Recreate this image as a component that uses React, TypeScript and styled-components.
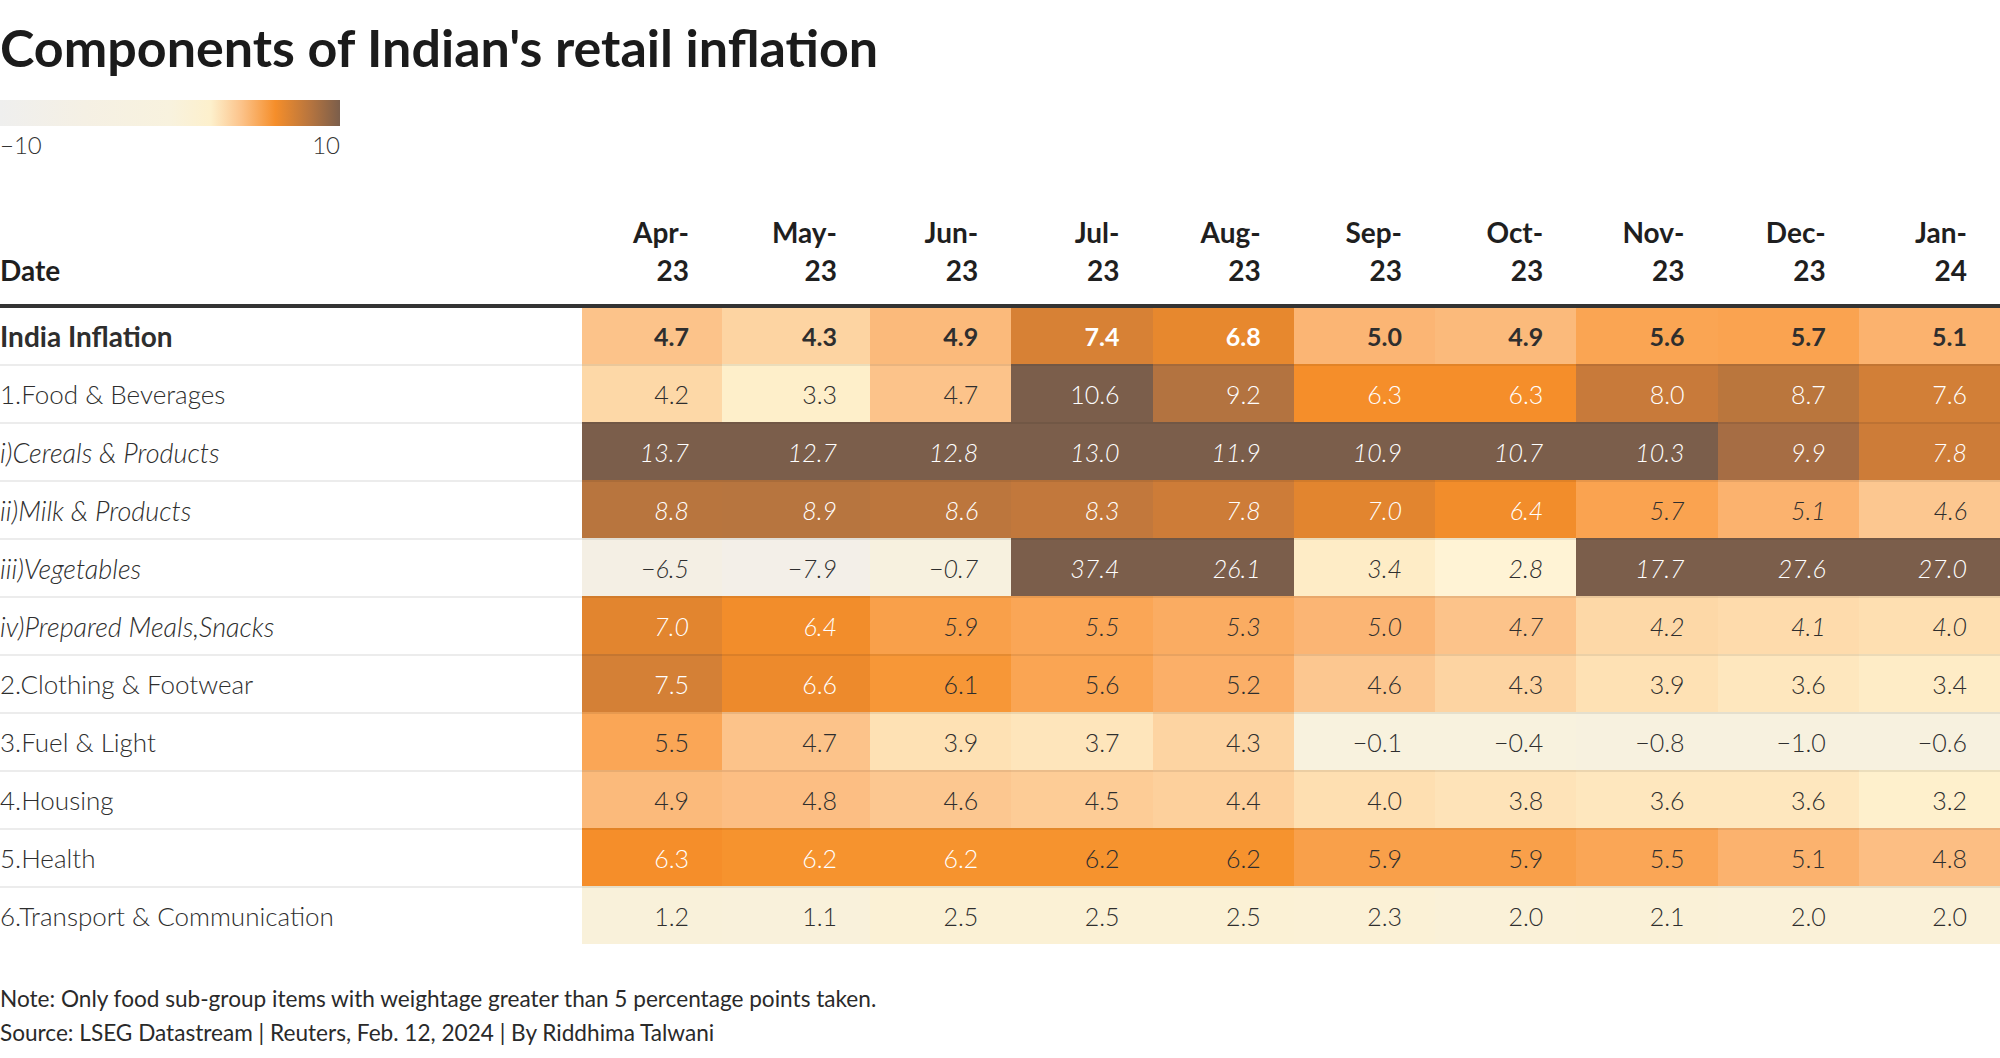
import styled, { createGlobalStyle } from 'styled-components';

const GlobalStyle = createGlobalStyle`
  html, body {
    margin: 0;
    padding: 0;
    background: #ffffff;
  }
  body {
    font-family: Lato, 'Liberation Sans', sans-serif;
    color: #222;
  }
`;

const COLS = '582px 140px 148px repeat(8, 1fr)';

const Page = styled.div`
  width: 2000px;
  padding-top: 25px;
`;

const Title = styled.h1`
  margin: 0;
  font-size: 52px;
  line-height: 45px;
  font-weight: 700;
  color: #1b1b1b;
`;

const Legend = styled.div`
  margin-top: 30px;
  width: 340px;
`;

const LegendBar = styled.div`
  height: 26px;
  background: linear-gradient(
    to right,
    #efefee 0%,
    #f5f0e4 25%,
    #f8f2de 50%,
    #fdf0cc 62%,
    #fcc38a 71%,
    #f58e2a 81%,
    #b8753e 91%,
    #7b5e4b 100%
  );
`;

const LegendLabels = styled.div`
  display: flex;
  justify-content: space-between;
  margin-top: 7px;
  font-size: 24px;
  line-height: 24px;
  font-weight: 300;
  color: #333;
`;

const Header = styled.div`
  display: grid;
  grid-template-columns: ${COLS};
  height: 151px;
  box-sizing: border-box;
  border-bottom: 4px solid #333;
`;

const HeadCell = styled.div<{ $left?: boolean }>`
  display: flex;
  align-items: flex-end;
  justify-content: ${p => (p.$left ? 'flex-start' : 'flex-end')};
  text-align: ${p => (p.$left ? 'left' : 'right')};
  padding: 0 ${p => (p.$left ? '0' : '33px')} 15px 0;
  font-size: 28px;
  line-height: 38px;
  font-weight: 700;
  color: #1f1f1f;
`;

const Row = styled.div`
  display: grid;
  grid-template-columns: ${COLS};
`;

const Cell = styled.div<{ $first?: boolean; $kind?: string }>`
  display: flex;
  align-items: center;
  height: 56px;
  border-top: ${p => (p.$first ? 'none' : '2px solid rgba(0, 0, 0, 0.075)')};
  font-size: 25px;
  line-height: 25px;
  font-weight: ${p => (p.$kind === 'total' ? 700 : 300)};
  font-style: ${p => (p.$kind === 'sub' ? 'italic' : 'normal')};
  color: #2e2e2e;
`;

const LabelCell = styled(Cell)`
  justify-content: flex-start;
  font-size: ${p => (p.$kind === 'total' ? '28px' : p.$kind === 'sub' ? '27px' : '26px')};
`;

const ValueCell = styled(Cell)<{ $light?: boolean }>`
  justify-content: flex-end;
  padding-right: 33px;
  color: ${p => (p.$light ? '#ffffff' : '#2e2e2e')};
`;

const Footer = styled.div`
  margin-top: 38px;
  font-size: 22.6px;
  line-height: 34px;
  font-weight: 400;
  color: #2a2a2a;
`;

const months: [string, string][] = [
  ['Apr', '23'],
  ['May', '23'],
  ['Jun', '23'],
  ['Jul', '23'],
  ['Aug', '23'],
  ['Sep', '23'],
  ['Oct', '23'],
  ['Nov', '23'],
  ['Dec', '23'],
  ['Jan', '24'],
];

type RowData = {
  label: string;
  kind?: 'total' | 'sub';
  values: number[];
  white?: number[];
};

const rows: RowData[] = [
  { label: 'India Inflation', kind: 'total', values: [4.7, 4.3, 4.9, 7.4, 6.8, 5.0, 4.9, 5.6, 5.7, 5.1] },
  { label: '1.Food & Beverages', values: [4.2, 3.3, 4.7, 10.6, 9.2, 6.3, 6.3, 8.0, 8.7, 7.6] },
  { label: 'i)Cereals & Products', kind: 'sub', values: [13.7, 12.7, 12.8, 13.0, 11.9, 10.9, 10.7, 10.3, 9.9, 7.8] },
  { label: 'ii)Milk & Products', kind: 'sub', values: [8.8, 8.9, 8.6, 8.3, 7.8, 7.0, 6.4, 5.7, 5.1, 4.6] },
  { label: 'iii)Vegetables', kind: 'sub', values: [-6.5, -7.9, -0.7, 37.4, 26.1, 3.4, 2.8, 17.7, 27.6, 27.0] },
  { label: 'iv)Prepared Meals,Snacks', kind: 'sub', values: [7.0, 6.4, 5.9, 5.5, 5.3, 5.0, 4.7, 4.2, 4.1, 4.0] },
  { label: '2.Clothing & Footwear', values: [7.5, 6.6, 6.1, 5.6, 5.2, 4.6, 4.3, 3.9, 3.6, 3.4] },
  { label: '3.Fuel & Light', values: [5.5, 4.7, 3.9, 3.7, 4.3, -0.1, -0.4, -0.8, -1.0, -0.6] },
  { label: '4.Housing', values: [4.9, 4.8, 4.6, 4.5, 4.4, 4.0, 3.8, 3.6, 3.6, 3.2] },
  { label: '5.Health', values: [6.3, 6.2, 6.2, 6.2, 6.2, 5.9, 5.9, 5.5, 5.1, 4.8], white: [0, 1, 2] },
  { label: '6.Transport & Communication', values: [1.2, 1.1, 2.5, 2.5, 2.5, 2.3, 2.0, 2.1, 2.0, 2.0] },
];

// colour scale, tuned against the chart's legend
const stops: [number, string][] = [
  [-10, '#efefee'],
  [-8, '#f3efe8'],
  [-6.5, '#f4efe4'],
  [-1, '#f7f1df'],
  [0, '#f8f2de'],
  [2, '#faf1d8'],
  [2.5, '#fbf1d5'],
  [2.8, '#fff3d5'],
  [3.3, '#feefca'],
  [3.6, '#fee7be'],
  [4.0, '#fedfb1'],
  [4.3, '#fdd4a2'],
  [4.7, '#fcc38a'],
  [5.0, '#fbb574'],
  [5.5, '#faa656'],
  [5.9, '#f9a04a'],
  [6.2, '#f6932e'],
  [6.3, '#f58e2a'],
  [7.0, '#e2852f'],
  [7.5, '#d48036'],
  [8.0, '#c87a3a'],
  [8.8, '#b8753e'],
  [9.2, '#b37340'],
  [9.9, '#a66d44'],
  [10.2, '#7b5e4b'],
];

const toRgb = (h: string) => [1, 3, 5].map(i => parseInt(h.slice(i, i + 2), 16));

function colorFor(v: number) {
  if (v <= stops[0][0]) return stops[0][1];
  for (let i = 0; i < stops.length - 1; i++) {
    const [a, ca] = stops[i];
    const [b, cb] = stops[i + 1];
    if (v <= b) {
      const t = (v - a) / (b - a);
      const x = toRgb(ca);
      const y = toRgb(cb);
      const c = x.map((n, k) => Math.round(n + (y[k] - n) * t));
      return `rgb(${c.join(',')})`;
    }
  }
  return stops[stops.length - 1][1];
}

const fmt = (v: number) => (v < 0 ? '\u2212' + Math.abs(v).toFixed(1) : v.toFixed(1));

export default function App() {
  return (
    <>
      <GlobalStyle />
      <Page>
        <Title>Components of Indian's retail inflation</Title>
        <Legend>
          <LegendBar />
          <LegendLabels>
            <span>{'\u2212'}10</span>
            <span>10</span>
          </LegendLabels>
        </Legend>

        <Header>
          <HeadCell $left>Date</HeadCell>
          {months.map(([m, y]) => (
            <HeadCell key={m}>
              <span>
                {m}-<br />
                {y}
              </span>
            </HeadCell>
          ))}
        </Header>

        {rows.map((r, ri) => (
          <Row key={r.label}>
            <LabelCell $first={ri === 0} $kind={r.kind}>
              {r.label}
            </LabelCell>
            {r.values.map((v, i) => (
              <ValueCell
                key={i}
                $first={ri === 0}
                $kind={r.kind}
                $light={v >= 6.25 || (r.white ? r.white.includes(i) : false)}
                style={{ background: colorFor(v) }}
              >
                {fmt(v)}
              </ValueCell>
            ))}
          </Row>
        ))}

        <Footer>
          <div>Note: Only food sub-group items with weightage greater than 5 percentage points taken.</div>
          <div>Source: LSEG Datastream | Reuters, Feb. 12, 2024 | By Riddhima Talwani</div>
        </Footer>
      </Page>
    </>
  );
}
